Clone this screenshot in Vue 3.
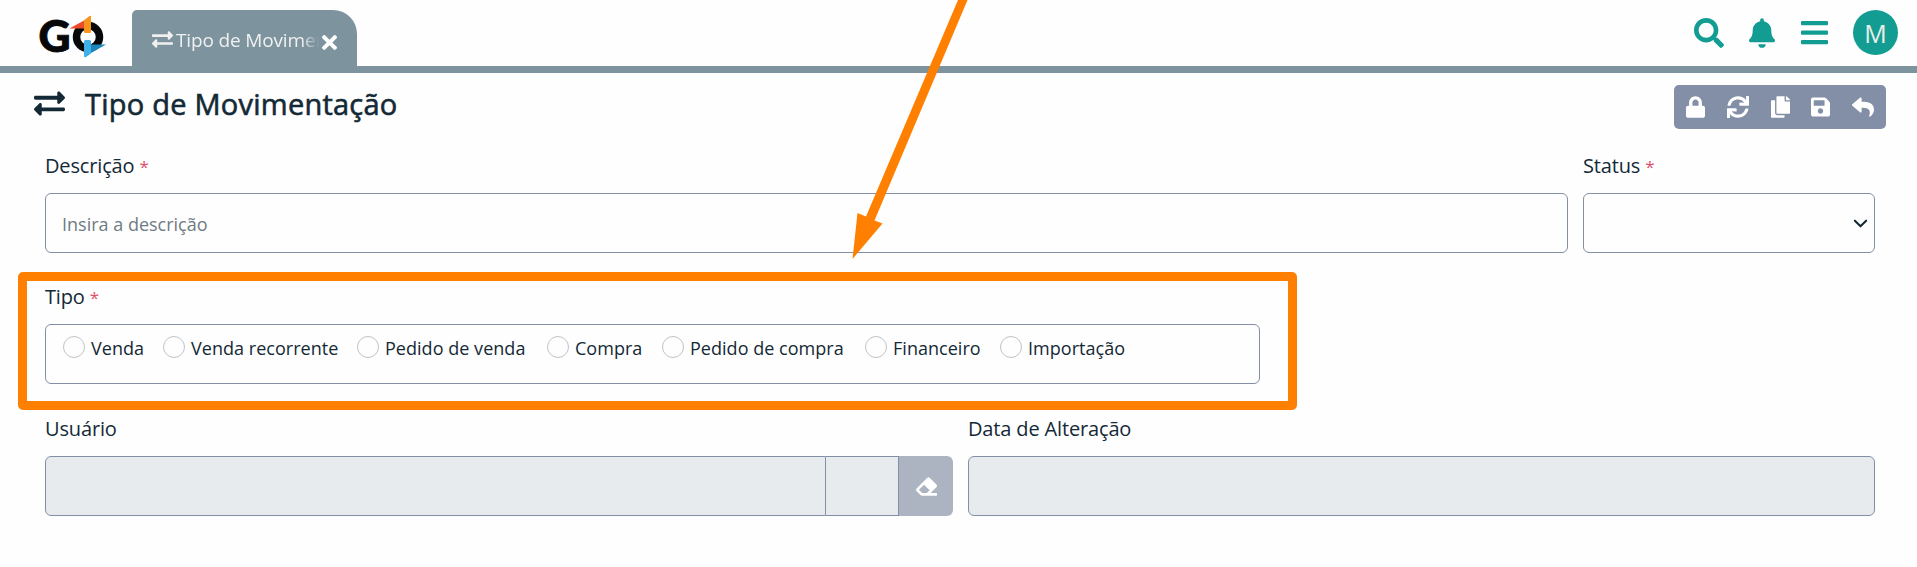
<script setup>
const icons = {
  swap: { w: 512, d: 'M0 168v-16c0-13.255 10.745-24 24-24h360V80c0-21.367 25.899-32.042 40.971-16.971l80 80c9.372 9.373 9.372 24.569 0 33.941l-80 80C409.956 271.982 384 261.456 384 240v-48H24c-13.255 0-24-10.745-24-24zm488 152H128v-48c0-21.314-25.862-32.08-40.971-16.971l-80 80c-9.372 9.373-9.372 24.569 0 33.941l80 80C102.057 463.997 128 453.437 128 432v-48h360c13.255 0 24-10.745 24-24v-16c0-13.255-10.745-24-24-24z' },
  close: { w: 352, d: 'M242.72 256l100.07-100.07c12.28-12.28 12.28-32.19 0-44.48l-22.24-22.24c-12.28-12.28-32.19-12.28-44.48 0L176 189.28 75.93 89.21c-12.28-12.28-32.19-12.28-44.48 0L9.21 111.45c-12.28 12.28-12.28 32.19 0 44.48L109.28 256 9.21 356.07c-12.28 12.28-12.28 32.19 0 44.48l22.24 22.24c12.28 12.28 32.2 12.28 44.48 0L176 322.72l100.07 100.07c12.28 12.28 32.2 12.28 44.48 0l22.24-22.24c12.28-12.28 12.28-32.19 0-44.48L242.72 256z' },
  search: { w: 512, d: 'M505 442.7L405.3 343c-4.5-4.5-10.6-7-17-7H372c27.6-35.3 44-79.7 44-128C416 93.1 322.9 0 208 0S0 93.1 0 208s93.1 208 208 208c48.3 0 92.7-16.4 128-44v16.3c0 6.4 2.5 12.5 7 17l99.7 99.7c9.4 9.4 24.6 9.4 33.9 0l28.3-28.3c9.4-9.4 9.4-24.6.1-34zM208 336c-70.7 0-128-57.2-128-128 0-70.7 57.2-128 128-128 70.7 0 128 57.2 128 128 0 70.7-57.2 128-128 128z' },
  bell: { w: 448, d: 'M224 512c35.32 0 63.97-28.65 63.97-64H160.03c0 35.35 28.65 64 63.97 64zm215.39-149.71c-19.32-20.76-55.47-51.99-55.47-154.29 0-77.7-54.48-139.9-127.94-155.16V32c0-17.67-14.32-32-31.98-32s-31.98 14.33-31.98 32v20.84C118.56 68.1 64.08 130.3 64.08 208c0 102.3-36.15 133.53-55.47 154.29-6 6.45-8.66 14.16-8.61 21.71.11 16.4 12.98 32 32.1 32h383.8c19.12 0 32-15.6 32.1-32 .05-7.55-2.61-15.27-8.61-21.71z' },
  lock: { w: 448, d: 'M400 224h-24v-72C376 68.2 307.8 0 224 0S72 68.2 72 152v72H48c-26.5 0-48 21.5-48 48v192c0 26.5 21.5 48 48 48h352c26.5 0 48-21.5 48-48V272c0-26.5-21.5-48-48-48zm-104 0H152v-72c0-39.7 32.3-72 72-72s72 32.3 72 72v72z' },
  sync: { w: 512, d: 'M440.65 12.57l4 82.77A247.16 247.16 0 0 0 255.83 8C134.73 8 33.91 94.92 12.29 209.82A12 12 0 0 0 24.09 224h49.05a12 12 0 0 0 11.67-9.26 175.91 175.91 0 0 1 317-56.94l-101.46-4.86a12 12 0 0 0-12.57 12v47.41a12 12 0 0 0 12 12H500a12 12 0 0 0 12-12V12a12 12 0 0 0-12-12h-47.37a12 12 0 0 0-11.98 12.57zM255.83 432a175.61 175.61 0 0 1-146-77.8l101.8 4.87a12 12 0 0 0 12.57-12v-47.4a12 12 0 0 0-12-12H12a12 12 0 0 0-12 12V500a12 12 0 0 0 12 12h47.35a12 12 0 0 0 12-12.6l-4.15-82.57A247.17 247.17 0 0 0 255.83 504c121.11 0 221.93-86.92 243.55-201.82a12 12 0 0 0-11.8-14.18h-49.05a12 12 0 0 0-11.67 9.26A175.86 175.86 0 0 1 255.83 432z' },
  copy: { w: 448, d: 'M320 448v40c0 13.255-10.745 24-24 24H24c-13.255 0-24-10.745-24-24V120c0-13.255 10.745-24 24-24h72v296c0 30.879 25.121 56 56 56h168zm0-344V0H152c-13.255 0-24 10.745-24 24v368c0 13.255 10.745 24 24 24h272c13.255 0 24-10.745 24-24V128H344c-13.2 0-24-10.8-24-24zm120.971-31.029L375.029 7.029A24 24 0 0 0 358.059 0H352v96h96v-6.059a24 24 0 0 0-7.029-16.97z' },
  save: { w: 448, d: 'M433.941 129.941l-83.882-83.882A48 48 0 0 0 316.118 32H48C21.49 32 0 53.49 0 80v352c0 26.51 21.49 48 48 48h352c26.51 0 48-21.49 48-48V163.882a48 48 0 0 0-14.059-33.941zM224 416c-35.346 0-64-28.654-64-64 0-35.346 28.654-64 64-64s64 28.654 64 64c0 35.346-28.654 64-64 64zm96-304.52V212c0 6.627-5.373 12-12 12H76c-6.627 0-12-5.373-12-12V108c0-6.627 5.373-12 12-12h228.52c3.183 0 6.235 1.264 8.485 3.515l3.48 3.48A11.996 11.996 0 0 1 320 111.48z' },
  reply: { w: 512, d: 'M8.309 189.836L184.313 37.851C199.719 24.546 224 35.347 224 56.015v80.053c160.629 1.839 288 34.032 288 186.258 0 61.441-39.581 122.309-83.333 154.132-13.653 9.931-33.111-2.533-28.077-18.631 45.344-145.012-21.507-183.51-176.59-185.742V360c0 20.7-24.3 31.453-39.687 18.164l-176.004-152c-11.071-9.562-11.086-26.753 0-36.328z' },
  eraser: { w: 512, d: 'M497.941 273.941c18.745-18.745 18.745-49.137 0-67.882l-160-160c-18.745-18.745-49.136-18.746-67.883 0l-256 256c-18.745 18.745-18.745 49.137 0 67.882l96 96A48.004 48.004 0 0 0 144 480h356c6.627 0 12-5.373 12-12v-40c0-6.627-5.373-12-12-12H355.883l142.058-142.059zm-302.627-62.627l137.373 137.373L265.373 416H150.628l-80-80 124.686-124.686z' },
}
const actions = ['lock', 'sync', 'copy', 'save', 'reply']
const types = ['Venda', 'Venda recorrente', 'Pedido de venda', 'Compra', 'Pedido de compra', 'Financeiro', 'Importação']
const box = (name) => `0 0 ${icons[name].w} 512`
</script>

<template>
  <div class="page">
    <header class="topbar">
      <svg class="logo" viewBox="0 0 70 50">
        <text x="0.4" y="40" textLength="32" lengthAdjust="spacingAndGlyphs" class="logo-g">G</text>
        <circle cx="50" cy="25" r="11.500" class="logo-ring" />
        <path d="M31.300 16.500 47 8v8.500z" fill="#ee4b2b" />
        <path d="M46 8.200 51.500 4q1.500 -1 1.500 1V19.500q0 1.500 -1.500 1.500h-4q-1.500 0 -1.500 -1.500z" fill="#f7941e" />
        <path d="M68 32.500 53 41v-8.500z" fill="#1d86b8" />
        <path d="M53 41.500 48 45q-2 1 -2 -1V29.500q0 -1.500 1.500 -1.500h4q1.500 0 1.500 1.500z" fill="#3fb0e8" />
      </svg>
      <div class="tab">
        <svg class="tab-icon" :viewBox="box('swap')"><path :d="icons.swap.d" /></svg>
        <span class="tab-text">Tipo de Movimentação</span>
        <svg class="tab-close" viewBox="0 80 352 352"><path :d="icons.close.d" /></svg>
      </div>
      <nav class="tools">
        <svg class="search" :viewBox="box('search')"><path :d="icons.search.d" /></svg>
        <svg class="bell" :viewBox="box('bell')"><path :d="icons.bell.d" /></svg>
        <svg class="bars" viewBox="0 0 27 24">
          <rect width="27" height="4.300" rx="1" /><rect y="9.500" width="27" height="4.300" rx="1" /><rect y="19" width="27" height="4.300" rx="1" />
        </svg>
        <div class="avatar">M</div>
      </nav>
    </header>

    <div class="heading">
      <svg class="heading-icon" :viewBox="box('swap')"><path :d="icons.swap.d" /></svg>
      <h1>Tipo de Movimentação</h1>
      <div class="actions">
        <svg v-for="a in actions" :key="a" :class="'act-' + a" :viewBox="box(a)"><path :d="icons[a].d" /></svg>
      </div>
    </div>

    <main class="form">
      <div class="row row-main">
        <div class="field">
          <label>Descrição <b>*</b></label>
          <div class="control placeholder">Insira a descrição</div>
        </div>
        <div class="field">
          <label>Status <b>*</b></label>
          <div class="control select">
            <svg viewBox="0 0 16 16"><path d="m2 5 6 6 6-6" /></svg>
          </div>
        </div>
      </div>
      <div class="row row-type">
        <div class="field">
          <label>Tipo <b>*</b></label>
          <div class="control radios">
            <span v-for="t in types" :key="t" class="radio"><i></i>{{ t }}</span>
          </div>
        </div>
      </div>
      <div class="row row-user">
        <div class="field">
          <label>Usuário</label>
          <div class="group">
            <div class="control disabled code"></div>
            <div class="control disabled name"></div>
            <div class="erase"><svg :viewBox="box('eraser')"><path :d="icons.eraser.d" /></svg></div>
          </div>
        </div>
        <div class="field">
          <label>Data de Alteração</label>
          <div class="control disabled"></div>
        </div>
      </div>
    </main>

    <div class="highlight"></div>
    <svg class="arrow" viewBox="0 0 160 280">
      <path d="M128 0H137.500L44.500 220.500 52.500 223.500 22.500 259 27.500 213 36 216.500z" />
    </svg>
  </div>
</template>

<style>
body { background: #fefefe; }
</style>

<style scoped>
* { box-sizing: border-box; }
.page { position: relative; height: 567px; overflow: hidden; background: #fefefe; color: #142936; font-family: "Segoe UI", "Open Sans", "Noto Sans", sans-serif; }
svg { display: block; flex: none; fill: currentColor; }
.topbar { display: flex; height: 73px; padding-left: 38px; border-bottom: 7px solid #7d939e; }
.logo { width: 70px; height: 50px; margin-top: 12px; overflow: visible; }
.logo-g { font: 900 43px Lato, sans-serif; fill: #060809; stroke: #060809; stroke-width: .9; }
.logo-ring { fill: none; stroke: #060809; stroke-width: 7.500; }
.tab { display: flex; align-items: center; width: 225px; height: 56px; margin: 10px 0 0 24px; padding: 0 20px; border-radius: 5px 24px 0 0; background: #7d939e; color: #f0f0f0; }
.tab-icon { width: 21px; height: 21px; margin-top: 3px; }
.tab-text { width: 143px; margin: 5px 3px 0 3px; overflow: hidden; white-space: nowrap; font-size: 19px; line-height: 27px; letter-spacing: -.15px; -webkit-mask-image: linear-gradient(90deg, #000 88%, transparent); mask-image: linear-gradient(90deg, #000 88%, transparent); }
.tab-close { width: 15px; height: 15px; margin-top: 9px; color: #fff; }
.tools { display: flex; align-items: flex-start; margin-left: auto; padding-right: 19px; color: #139d92; }
.search { width: 30px; height: 30px; margin: 18px 25px 0 0; }
.bell { width: 26px; height: 30px; margin: 18px 26px 0 0; }
.bars { width: 27px; height: 24px; margin: 21px 25px 0 0; }
.avatar { width: 45px; height: 45px; margin-top: 10px; border-radius: 50%; background: #139d92; color: #e9eee9; text-align: center; font-size: 25px; line-height: 47px; }
.heading { display: flex; align-items: center; height: 68px; padding: 0 31px 0 34px; }
.heading-icon { width: 31px; height: 31px; margin-top: -7px; }
h1 { margin: -7px 0 0 20px; font-size: 29px; line-height: 40px; font-weight: 500; letter-spacing: .24px; -webkit-text-stroke: .6px currentColor; }
.actions { display: flex; align-items: center; gap: 22px; width: 212px; height: 44px; margin-left: auto; padding-left: 12px; border-radius: 5px; background: #828fa6; color: #fff; }
.actions svg { width: 22px; height: 22px; }
.actions .act-lock, .actions .act-copy, .actions .act-save { width: 19px; }
.actions .act-copy, .actions .act-save, .actions .act-reply { margin-left: -.4px; }
.form { padding: 8px 42px 0 45px; }
.row { display: grid; gap: 15px; height: 131px; }
.row-main { grid-template-columns: 1523px 292px; }
.row-type { grid-template-columns: 1215px; height: 132px; }
.row-user { grid-template-columns: 908px 907px; }
label { display: block; height: 44px; font-size: 20px; line-height: 33px; letter-spacing: -.15px; }
label b { color: #e0506a; font-weight: 400; font-size: 17px; }
.control { height: 60px; border: 1px solid #828fa6; border-radius: 6px; }
.placeholder { padding-left: 16px; color: #6f7b83; font-size: 18px; line-height: 60px; letter-spacing: 0; }
.select { display: flex; align-items: center; justify-content: flex-end; padding-right: 6px; }
.select svg { width: 15px; height: 15px; fill: none; stroke: currentColor; stroke-width: 2.200; stroke-linecap: round; stroke-linejoin: round; }
.radios { display: grid; grid-template-columns: 100px 194px 190px 115px 203px 135px auto; padding: 11px 0 0 17px; }
.radio { display: flex; height: 24px; font-size: 18px; line-height: 25px; letter-spacing: .03px; white-space: nowrap; }
.radio i { width: 22px; height: 22px; margin-right: 6px; border: 1px solid #bfc4c8; border-radius: 50%; flex: none; }
.disabled { background: #e7ebee; }
.group { display: flex; }
.code { width: 781px; border-radius: 6px 0 0 6px; }
.name { width: 73px; border-left: 0; border-radius: 0; }
.erase { display: flex; align-items: center; justify-content: center; width: 54px; height: 60px; border-radius: 0 6px 6px 0; background: #acb3c1; color: #fff; }
.erase svg { width: 21px; height: 21px; }
.highlight { position: absolute; left: 18px; top: 272px; width: 1279px; height: 138px; border: 9px solid #ff8000; border-radius: 5px; }
.arrow { position: absolute; left: 830px; top: 0; width: 160px; height: 280px; color: #ff8000; }
</style>
